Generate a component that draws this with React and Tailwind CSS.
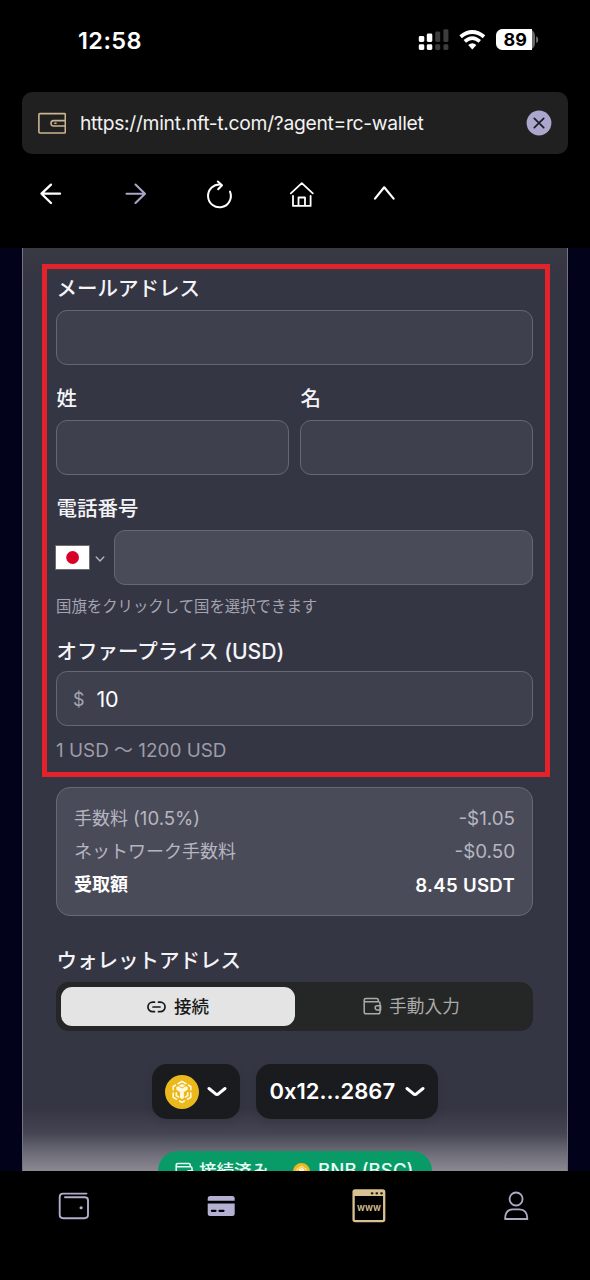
import React from "react";

const line = { fill: "none", strokeLinecap: "round", strokeLinejoin: "round" };

function StatusBar() {
  return (
    <div className="flex h-[92px] shrink-0 items-start justify-between pr-[51px] pl-[78px]">
      <div className="mt-[26px] text-[23.500px] leading-[30px] font-semibold tracking-[0.400px] text-white">12:58</div>
      <div className="mt-[28px] flex items-center">
        <svg width="32" height="24" viewBox="418 28 32 24">
          <g fill="#fff">
            <rect x="418.8" y="36" width="5.500" height="6" rx="1.400" />
            <rect x="426.8" y="33.500" width="5.500" height="8.500" rx="1.400" />
            <rect x="418.8" y="44.300" width="5.500" height="5.700" rx="1.400" />
            <rect x="426.8" y="44.300" width="5.500" height="5.700" rx="1.400" />
          </g>
          <g fill="#3c3c3c">
            <rect x="435.2" y="31.500" width="5" height="10.500" rx="1.400" />
            <rect x="443.4" y="29.200" width="5" height="12.800" rx="1.400" />
            <rect x="435.2" y="44.300" width="5" height="5.700" rx="1.400" />
            <rect x="443.4" y="44.300" width="5" height="5.700" rx="1.400" />
          </g>
        </svg>
        <svg className="ml-[8px]" width="28" height="24" viewBox="458 28 28 24">
          <path d="M460.600 36.700Q472.300 27.300 484 36.700" fill="none" stroke="#fff" strokeWidth="3.900" />
          <path d="M464.800 41.400Q472.300 34.800 479.800 41.400" fill="none" stroke="#fff" strokeWidth="3.600" />
          <path d="M468.200 45Q472.300 41.600 476.400 45L472.300 49.400Z" fill="#fff" />
        </svg>
        <svg className="ml-[9px]" width="44" height="24" viewBox="495 28 44 24">
          <rect x="496" y="29" width="39" height="21" rx="6.500" fill="#6a6a6a" />
          <path d="M502.500 29H532V50H502.500A6.500 6.500 0 0 1 496 43.500V35.500A6.500 6.500 0 0 1 502.500 29Z" fill="#fff" />
          <path d="M536.200 36.300Q538.200 37 538.200 39.700T536.200 43Z" fill="#777" />
          <text x="515.200" y="46.200" textAnchor="middle" fontSize="18" fontWeight="700" fill="#000">89</text>
        </svg>
      </div>
    </div>
  );
}

function AddressBar() {
  return (
    <div className="mx-[22px] flex h-[62px] shrink-0 items-center rounded-[10px] bg-[#202020] pr-[16px] pl-[16px]">
      <svg width="28" height="22" viewBox="38 112 28 22" {...line} stroke="#c9b590" strokeWidth="1.600">
        <rect x="38.900" y="113.600" width="26.400" height="19.400" rx="1" />
        <path d="M65.300 120.600H53.500Q51 120.600 51 123.300T53.500 126H65.300" />
        <path d="M54.800 123.300H56" />
      </svg>
      <div className="ml-[14px] flex-1 text-[19.300px] leading-[28px] whitespace-nowrap text-[#f2f2f2]">
        <span className="inline-block w-[346px] tracking-[-0.300px]">https://mint.nft-t.com/?agent=rc-wallet</span>
      </div>
      <svg width="26" height="26" viewBox="0 0 26 26">
        <circle cx="13" cy="13" r="12.400" fill="#aaa6cc" />
        <path d="M8.300 8.300L17.700 17.700M17.700 8.300L8.300 17.700" stroke="#1c1b26" strokeWidth="1.700" strokeLinecap="round" />
      </svg>
    </div>
  );
}

function Toolbar() {
  return (
    <div className="flex h-[94px] shrink-0 items-start gap-[44px] pt-[20px] pl-[30px]">
      <svg width="40" height="40" viewBox="30 174 40 40" {...line} stroke="#fff" strokeWidth="2.300">
        <path d="M60 193.700H41.500M51 184.600L41.500 193.700L51 203" />
      </svg>
      <svg width="40" height="40" viewBox="114 174 40 40" {...line} stroke="#aaa6c8" strokeWidth="2.100">
        <path d="M126.500 193.700H145M135.500 184.600L145 193.700L135.500 203" />
      </svg>
      <svg width="40" height="40" viewBox="198 174 40 40" {...line} stroke="#fff" strokeWidth="2">
        <path d="M230 191.600A11.400 11.400 0 1 1 220.800 184.600M217.800 181.500L222 185.200L218.200 189.200" />
      </svg>
      <svg width="40" height="40" viewBox="282 174 40 40" {...line} stroke="#fff" strokeWidth="1.800">
        <path d="M290.800 193.400L301.800 183.200L312.800 193.400M293 196V205.900H310.600V196M298.500 205.600V197.500H305V205.600" />
      </svg>
      <svg width="40" height="40" viewBox="366 174 40 40" {...line} stroke="#fff" strokeWidth="2.200">
        <path d="M375 198.600L384.200 187.300L393.600 198.600" />
      </svg>
    </div>
  );
}

function Label({ children }) {
  return <div className="h-[24px] pt-[1px] pl-[0.500px] text-[20.500px] leading-[24px] font-medium whitespace-nowrap text-[#f4f4f8]">{children}</div>;
}

function Field({ children, tone = "bg-[#3f404e]" }) {
  return (
    <div className={"flex h-[55px] w-full items-center rounded-[11px] border border-[#666775] " + tone}>{children}</div>
  );
}

function FeeRow({ name, value, strong }) {
  return (
    <div
      className={
        "flex h-[33px] items-center justify-between text-[18px] leading-[26px] " +
        (strong ? "font-semibold text-white" : "text-[#b5b5c0]")
      }
    >
      <span className={strong ? "font-bold" : ""}>{name}</span>
      <span className={strong ? "text-[18.600px] tracking-[0.300px]" : "text-[18.800px]"}>{value}</span>
    </div>
  );
}

function Chevron() {
  return (
    <svg width="20" height="12" viewBox="0 0 20 12" {...line} stroke="#fff" strokeWidth="3">
      <path d="M2 2.500L8.300 7.700Q10 9 11.700 7.700L18 2.500" />
    </svg>
  );
}

function BnbCoin({ size }) {
  return (
    <svg width={size} height={size} viewBox="0 0 34 34">
      <circle cx="17" cy="17" r="17" fill="#ecb91c" />
      <g {...line} stroke="#fff8dc" strokeWidth="1.600" strokeLinejoin="miter">
        <path d="M13 8.700L17 6.500L21 8.700M10.500 10.200L8.200 11.500V14.800M23.500 10.200L25.800 11.500V14.800M8.200 18V22.300L11.500 24.200M25.800 18V22.300L22.500 24.200M14.600 26L17 27.400L19.400 26" />
        <path d="M11.300 17.800V20.600L13.600 22M22.700 17.800V20.600L20.400 22" />
      </g>
      <path d="M17 8.900L20.300 10.700L17 12.600L13.700 10.700ZM11.300 12L13.200 11.200L17 13.500L20.800 11.200L22.700 12V14.700L18.900 17V23L17 24.100L15.100 23V17L11.300 14.700Z" fill="#fff8dc" />
    </svg>
  );
}

function WalletGlyph({ className = "" }) {
  return (
    <svg className={className} width="19" height="19" viewBox="0 0 19 19" {...line} stroke="currentColor" strokeWidth="1.500">
      <path d="M15.300 4.700V3.200Q15.300 1.500 13.600 1.500H3Q1.200 1.500 1.200 3.200T3 4.700H15.600Q17 4.700 17 6.200V15Q17 16.800 15.200 16.800H3Q1.200 16.800 1.200 15V3.200" />
      <path d="M17.600 8.700H14.200A2.100 2.100 0 0 0 14.200 12.900H17.600Z" />
    </svg>
  );
}

function Form() {
  return (
    <div className="relative h-[923px] shrink-0 overflow-hidden bg-[#02031a] px-[22px]">
      <div className="flex h-[923px] flex-col overflow-hidden border-x border-[#757582] bg-[linear-gradient(to_bottom,#393942_0px,#363743_20px,#353644_45px,#353644_860px,#444452_885px,#676672_902px,#8b8a93_923px)] pr-[34px] pl-[33px] pt-[28px]">
        <Label>メールアドレス</Label>
        <div className="mt-[10px]">
          <Field />
        </div>

        <div className="mt-[21px] grid grid-cols-2 gap-[11px]">
          <div>
            <Label>姓</Label>
            <div className="mt-[10px]"><Field /></div>
          </div>
          <div>
            <Label>名</Label>
            <div className="mt-[10px]"><Field /></div>
          </div>
        </div>

        <div className="mt-[21px]">
          <Label>電話番号</Label>
        </div>
        <div className="mt-[10px] flex items-center">
          <svg className="-ml-[1px] shrink-0" width="59" height="28" viewBox="0 0 59 28">
            <rect x="0.500" y="1.500" width="34" height="24" fill="#fff" stroke="#6d6d70" />
            <circle cx="17.600" cy="13.500" r="6.400" fill="#d80027" />
            <path d="M41.200 13L45 17L48.800 13" {...line} stroke="#b2b2bd" strokeWidth="1.400" />
          </svg>
          <Field tone="bg-[#4a4b59]" />
        </div>
        <div className="mt-[11px] h-[22px] text-[15.400px] leading-[22px] whitespace-nowrap text-[#a4a4b0]">
          国旗をクリックして国を選択できます
        </div>

        <div className="mt-[20px]">
          <Label>
            オファープライス <span className="text-[21.200px]">(USD)</span>
          </Label>
        </div>
        <div className="mt-[9px]">
          <Field>
            <span className="ml-[16px] pt-[1px] text-[18px] text-[#a5a5b0]">$</span>
            <span className="ml-[12px] pt-[2px] text-[21.500px] tracking-[-0.400px] text-white">10</span>
          </Field>
        </div>
        <div className="mt-[12px] h-[26px] text-[18.900px] leading-[26px] whitespace-nowrap text-[#9d9daa]">
          1 USD 〜 1200 USD
        </div>

        <div className="mt-[23px] h-[129px] shrink-0 rounded-[14px] border border-[#686976] bg-[#4a4b59] px-[17px] pt-[14px]">
          <FeeRow name={<>手数料 <span className="text-[18.600px]">(10.5%)</span></>} value="-$1.05" />
          <FeeRow name="ネットワーク手数料" value="-$0.50" />
          <FeeRow name="受取額" value="8.45 USDT" strong />
        </div>

        <div className="mt-[32px]">
          <Label>ウォレットアドレス</Label>
        </div>
        <div className="mt-[10px] flex h-[49px] shrink-0 rounded-[13px] bg-[#252626] p-[5px]">
          <div className="flex h-[39px] w-[234px] items-center justify-center gap-[8px] rounded-[11px] bg-[#e4e4e4] text-[17.500px] font-medium text-[#191919]">
            <svg width="19" height="12" viewBox="0 0 19 12" {...line} stroke="#191919" strokeWidth="1.700">
              <path d="M7.500 1.200H5.700A4.700 4.700 0 0 0 5.700 10.700H7.500M11.500 1.200H13.300A4.700 4.700 0 0 1 13.300 10.700H11.500M6 6H13" />
            </svg>
            <span className="pt-[2px]">接続</span>
          </div>
          <div className="flex flex-1 items-center justify-center gap-[7px] text-[17.700px] text-[#aaaaaa]">
            <WalletGlyph />
            <span className="pt-[2px]">手動入力</span>
          </div>
        </div>

        <div className="mt-[33px] flex shrink-0 justify-center gap-[16px]">
          <div className="flex h-[55px] w-[88px] items-center gap-[8px] rounded-[15px] bg-[#1a1b1f] pl-[13px] shadow-[0_3px_10px_rgba(0,0,0,0.100)]">
            <BnbCoin size={34} />
            <Chevron />
          </div>
          <div className="flex h-[55px] w-[182px] items-center gap-[9px] rounded-[15px] bg-[#1a1b1f] pl-[14px] text-[22px] font-semibold whitespace-nowrap text-white shadow-[0_3px_10px_rgba(0,0,0,0.100)]">
            <span className="w-[126px]">0x12...2867</span>
            <Chevron />
          </div>
        </div>

        <div className="mt-[32px] ml-[102px] flex h-[40px] w-[274px] shrink-0 items-center rounded-[20px] bg-[#089b68] pl-[17px] text-[17.500px] font-medium whitespace-nowrap text-[#e9fff6]">
          <WalletGlyph />
          <span className="ml-[5px] w-[70px]">接続済み</span>
          <span className="ml-[24px] flex"><BnbCoin size={17} /></span>
          <span className="ml-[8px] text-[18.700px]">BNB (BSC)</span>
        </div>
      </div>
      <div className="absolute top-[16px] left-[42px] h-[513px] w-[508px] border-5 border-[#e2232c]" />
    </div>
  );
}

function BottomNav() {
  return (
    <div className="flex flex-1 items-start bg-black pt-[10px]">
      <div className="flex flex-1 justify-center">
        <svg width="50" height="50" viewBox="49 1181 50 50" {...line} stroke="#b1adca" strokeWidth="1.900">
          <path d="M86.500 1193.600H63Q59.700 1193.600 59.700 1197V1214.500Q59.700 1218.200 63.200 1218.200H84.500Q88 1218.200 88 1214.800V1200.400Q88 1197.200 84.800 1197.200H65" />
          <path d="M81 1207.700H81.200" strokeWidth="3" />
        </svg>
      </div>
      <div className="flex flex-1 justify-center">
        <svg width="50" height="50" viewBox="196.300 1181 50 50">
          <path d="M208 1202.400V1198.500Q208 1196 210.500 1196H232.500Q235 1196 235 1198.500V1200.800H208ZM208 1203.600H235V1213.500Q235 1216 232.500 1216H210.500Q208 1216 208 1213.500Z" fill="#b4b0d2" />
          <path d="M212.200 1210.800H215.800M219.800 1210.800H223.800" stroke="#000" strokeWidth="2.300" strokeLinecap="round" />
        </svg>
      </div>
      <div className="flex flex-1 justify-center">
        <svg width="50" height="50" viewBox="343.700 1181 50 50">
          <rect x="353.300" y="1190.300" width="30.600" height="30.800" rx="1.500" fill="none" stroke="#d9c192" strokeWidth="2.300" />
          <path d="M353 1190H384V1196H353Z" fill="#d9c192" />
          <path d="M371.500 1193.300H372.100M376.200 1193.300H376.800M380.900 1193.300H381.500" stroke="#221e12" strokeWidth="2.200" strokeLinecap="round" />
          <text x="368.800" y="1211" textAnchor="middle" fontSize="9.500" fontWeight="600" letterSpacing="0.100" fill="#d9c192">www</text>
        </svg>
      </div>
      <div className="flex flex-1 justify-center">
        <svg width="50" height="50" viewBox="491.200 1181 50 50" {...line} stroke="#aeaac6" strokeWidth="1.800">
          <circle cx="516.300" cy="1199" r="6.500" />
          <path d="M505.300 1219H527.600Q527.600 1209.300 519.500 1209.300H513.300Q505.300 1209.300 505.300 1219Z" />
        </svg>
      </div>
    </div>
  );
}

export default function App() {
  return (
    <div className="flex h-[1280px] w-[590px] flex-col overflow-hidden bg-black font-['Inter','Noto_Sans_CJK_JP',sans-serif]">
      <StatusBar />
      <AddressBar />
      <Toolbar />
      <Form />
      <BottomNav />
    </div>
  );
}
